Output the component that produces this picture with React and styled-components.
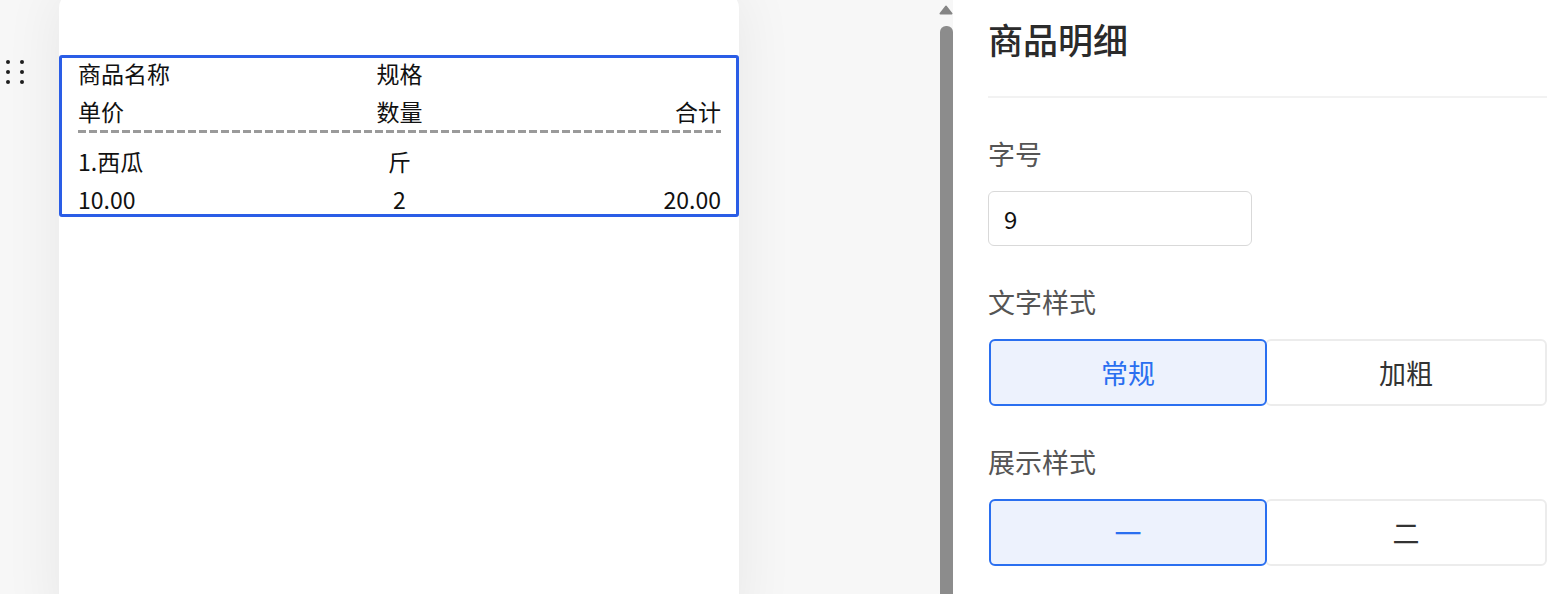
import React, { useState } from "react";
import styled, { createGlobalStyle } from "styled-components";

const GlobalStyle = createGlobalStyle`
  html, body {
    margin: 0;
    padding: 0;
    background: #f7f7f7;
    font-family: "Noto Sans CJK SC", "Noto Sans", sans-serif;
    overflow: hidden;
  }
`;

const columns = [
  [
    { text: "商品名称", align: "left" },
    { text: "规格", align: "center" },
    { text: "", align: "right" },
  ],
  [
    { text: "单价", align: "left" },
    { text: "数量", align: "center" },
    { text: "合计", align: "right" },
  ],
];

const items = [
  [
    { text: "1.西瓜", align: "left" },
    { text: "斤", align: "center" },
    { text: "", align: "right" },
  ],
  [
    { text: "10.00", align: "left" },
    { text: "2", align: "center" },
    { text: "20.00", align: "right" },
  ],
];

function Row({ cells }) {
  return (
    <TableRow>
      {cells.map((c, i) => (
        <Cell key={i} $align={c.align}>
          {c.text}
        </Cell>
      ))}
    </TableRow>
  );
}

function Segmented({ options, value, onChange }) {
  return (
    <SegGroup>
      {options.map((o) => (
        <SegButton key={o} $active={o === value} onClick={() => onChange(o)}>
          {o}
        </SegButton>
      ))}
    </SegGroup>
  );
}

export default function App() {
  const [weight, setWeight] = useState("常规");
  const [layout, setLayout] = useState("一");

  return (
    <Page>
      <GlobalStyle />
      <Canvas>
        <HandleCol>
          <Handle>
            {Array.from({ length: 6 }).map((_, i) => (
              <Dot key={i} />
            ))}
          </Handle>
        </HandleCol>
        <Card>
          <Block>
            {columns.map((r, i) => (
              <Row key={i} cells={r} />
            ))}
            <Dashed />
            <ItemRows>
              {items.map((r, i) => (
                <Row key={i} cells={r} />
              ))}
            </ItemRows>
          </Block>
        </Card>
      </Canvas>

      <ScrollTrack>
        <ScrollArrow viewBox="0 0 14 10">
          <path d="M7 1.5 L12.5 8.5 L1.5 8.5 Z" fill="#858585" stroke="#858585" strokeWidth="2" strokeLinejoin="round" />
        </ScrollArrow>
        <ScrollThumb />
      </ScrollTrack>

      <Panel>
        <Title>商品明细</Title>
        <Divider />
        <Field>
          <Label>字号</Label>
          <Input defaultValue="9" />
        </Field>
        <Field>
          <Label>文字样式</Label>
          <Segmented options={["常规", "加粗"]} value={weight} onChange={setWeight} />
        </Field>
        <Field>
          <Label>展示样式</Label>
          <Segmented options={["一", "二"]} value={layout} onChange={setLayout} />
        </Field>
      </Panel>
    </Page>
  );
}

const Page = styled.div`
  display: flex;
  width: 1555px;
  height: 594px;
  overflow: hidden;
  background: #f7f7f7;
`;

const Canvas = styled.div`
  flex: 1;
  display: flex;
  align-items: flex-start;
  min-width: 0;
`;

const HandleCol = styled.div`
  width: 59px;
  flex-shrink: 0;
  padding: 60px 0 0 6px;
  box-sizing: border-box;
`;

const Handle = styled.div`
  display: grid;
  grid-template-columns: 4px 4px;
  column-gap: 10px;
  row-gap: 6px;
`;

const Dot = styled.span`
  width: 4px;
  height: 4px;
  border-radius: 50%;
  background: #1f1f1f;
`;

const Card = styled.div`
  width: 680px;
  height: 640px;
  margin-top: -8px;
  padding-top: 63px;
  box-sizing: border-box;
  background: #ffffff;
  border-radius: 16px;
  box-shadow: 0 0 60px rgba(0, 0, 0, 0.07);
`;

const Block = styled.div`
  border: 3px solid #2a5de6;
  border-radius: 3px;
  padding: 0 15px 0 16px;
  display: flex;
  flex-direction: column;
  gap: 8px;
  color: #111;
`;

const ItemRows = styled.div`
  display: flex;
  flex-direction: column;
  gap: 8px;
  margin-top: 5px;
`;

const TableRow = styled.div`
  display: grid;
  grid-template-columns: 1fr 1fr 1fr;
  height: 30px;
  line-height: 30px;
  font-size: 23px;
`;

const Cell = styled.div`
  text-align: ${(p) => p.$align};
  white-space: nowrap;
`;

const Dashed = styled.div`
  height: 3px;
  margin-top: -4px;
  background: repeating-linear-gradient(
    to right,
    #9a9a9a 0,
    #9a9a9a 8px,
    transparent 8px,
    transparent 11px
  );
`;

const ScrollTrack = styled.div`
  width: 14px;
  flex-shrink: 0;
  margin-left: -1px;
  display: flex;
  flex-direction: column;
  align-items: center;
  padding-top: 5px;
  gap: 11px;
`;

const ScrollArrow = styled.svg`
  width: 14px;
  height: 10px;
  display: block;
`;

const ScrollThumb = styled.div`
  width: 13px;
  flex: 1;
  background: #8c8c8c;
  border-radius: 6px 6px 0 0;
`;

const Panel = styled.div`
  width: 602px;
  flex-shrink: 0;
  background: #ffffff;
  padding: 15px 8px 0 35px;
  box-sizing: border-box;
  display: flex;
  flex-direction: column;
`;

const Title = styled.div`
  font-size: 35px;
  line-height: 48px;
  color: #2b2b2b;
  font-weight: 500;
`;

const Divider = styled.div`
  height: 2px;
  background: #f2f2f2;
  margin-top: 33px;
`;

const Field = styled.div`
  display: flex;
  flex-direction: column;
  margin-top: 38px;
`;

const Label = styled.div`
  font-size: 27px;
  line-height: 36px;
  color: #555;
  margin-bottom: 19px;
`;

const Input = styled.input`
  width: 264px;
  height: 55px;
  box-sizing: border-box;
  border: 1.5px solid #d9d9d9;
  border-radius: 6px;
  padding: 0 15px;
  font-family: "Noto Sans CJK SC", "Noto Sans", sans-serif;
  font-size: 24px;
  color: #111;
  outline: none;
`;

const SegGroup = styled.div`
  display: grid;
  grid-template-columns: 278px 1fr;
  height: 67px;
  margin-left: 1px;
`;

const SegButton = styled.button`
  font-family: "Noto Sans CJK SC", "Noto Sans", sans-serif;
  font-size: 27px;
  border-radius: 6px;
  cursor: pointer;
  padding: 0;
  border: ${(p) => (p.$active ? "2px solid #2a6ff0" : "2px solid #ececec")};
  background: ${(p) => (p.$active ? "#edf2fd" : "#ffffff")};
  color: ${(p) => (p.$active ? "#2a6ff0" : "#333")};
  ${(p) => (p.$active ? "position: relative; z-index: 1;" : "margin-left: -2px;")}
`;
